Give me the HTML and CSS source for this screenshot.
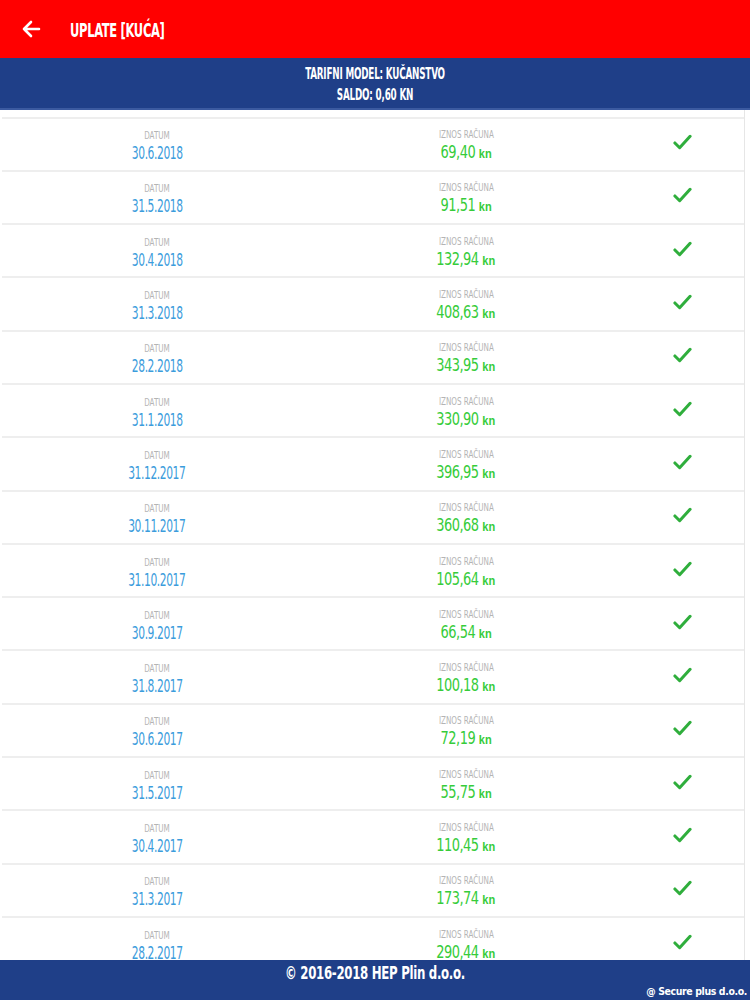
FILE: index.html
```html
<!DOCTYPE html>
<html lang="hr">
<head>
<meta charset="utf-8">
<title>Uplate</title>
<link rel="stylesheet" href="styles.css">
</head>
<body>
<div class="app">
  <header class="topbar">
    <svg class="back" viewBox="0 0 24 24" width="24" height="24"><path d="M20 12H5M12 5l-7 7 7 7" fill="none" stroke="#fff" stroke-width="2.6" stroke-linecap="round" stroke-linejoin="round"/></svg>
    <h1 class="title">UPLATE [KUĆA]</h1>
  </header>
  <div class="info">
    <div>TARIFNI MODEL: KUČANSTVO</div>
    <div>SALDO: 0,60 KN</div>
  </div>
  <main class="list">
    <div class="row"><div class="col"><span class="lbl">DATUM</span><span class="date">30.6.2018</span></div><div class="col"><span class="lbl">IZNOS RAČUNA</span><span class="amt">69,40 <small>kn</small></span></div><div class="chk"><svg viewBox="0 0 20 16" width="19" height="16"><path d="M2 9l5 5L18 2" fill="none" stroke="#2fae3c" stroke-width="3.2" stroke-linecap="round" stroke-linejoin="round"/></svg></div></div>
    <div class="row"><div class="col"><span class="lbl">DATUM</span><span class="date">31.5.2018</span></div><div class="col"><span class="lbl">IZNOS RAČUNA</span><span class="amt">91,51 <small>kn</small></span></div><div class="chk"><svg viewBox="0 0 20 16" width="19" height="16"><path d="M2 9l5 5L18 2" fill="none" stroke="#2fae3c" stroke-width="3.2" stroke-linecap="round" stroke-linejoin="round"/></svg></div></div>
    <div class="row"><div class="col"><span class="lbl">DATUM</span><span class="date">30.4.2018</span></div><div class="col"><span class="lbl">IZNOS RAČUNA</span><span class="amt">132,94 <small>kn</small></span></div><div class="chk"><svg viewBox="0 0 20 16" width="19" height="16"><path d="M2 9l5 5L18 2" fill="none" stroke="#2fae3c" stroke-width="3.2" stroke-linecap="round" stroke-linejoin="round"/></svg></div></div>
    <div class="row"><div class="col"><span class="lbl">DATUM</span><span class="date">31.3.2018</span></div><div class="col"><span class="lbl">IZNOS RAČUNA</span><span class="amt">408,63 <small>kn</small></span></div><div class="chk"><svg viewBox="0 0 20 16" width="19" height="16"><path d="M2 9l5 5L18 2" fill="none" stroke="#2fae3c" stroke-width="3.2" stroke-linecap="round" stroke-linejoin="round"/></svg></div></div>
    <div class="row"><div class="col"><span class="lbl">DATUM</span><span class="date">28.2.2018</span></div><div class="col"><span class="lbl">IZNOS RAČUNA</span><span class="amt">343,95 <small>kn</small></span></div><div class="chk"><svg viewBox="0 0 20 16" width="19" height="16"><path d="M2 9l5 5L18 2" fill="none" stroke="#2fae3c" stroke-width="3.2" stroke-linecap="round" stroke-linejoin="round"/></svg></div></div>
    <div class="row"><div class="col"><span class="lbl">DATUM</span><span class="date">31.1.2018</span></div><div class="col"><span class="lbl">IZNOS RAČUNA</span><span class="amt">330,90 <small>kn</small></span></div><div class="chk"><svg viewBox="0 0 20 16" width="19" height="16"><path d="M2 9l5 5L18 2" fill="none" stroke="#2fae3c" stroke-width="3.2" stroke-linecap="round" stroke-linejoin="round"/></svg></div></div>
    <div class="row"><div class="col"><span class="lbl">DATUM</span><span class="date">31.12.2017</span></div><div class="col"><span class="lbl">IZNOS RAČUNA</span><span class="amt">396,95 <small>kn</small></span></div><div class="chk"><svg viewBox="0 0 20 16" width="19" height="16"><path d="M2 9l5 5L18 2" fill="none" stroke="#2fae3c" stroke-width="3.2" stroke-linecap="round" stroke-linejoin="round"/></svg></div></div>
    <div class="row"><div class="col"><span class="lbl">DATUM</span><span class="date">30.11.2017</span></div><div class="col"><span class="lbl">IZNOS RAČUNA</span><span class="amt">360,68 <small>kn</small></span></div><div class="chk"><svg viewBox="0 0 20 16" width="19" height="16"><path d="M2 9l5 5L18 2" fill="none" stroke="#2fae3c" stroke-width="3.2" stroke-linecap="round" stroke-linejoin="round"/></svg></div></div>
    <div class="row"><div class="col"><span class="lbl">DATUM</span><span class="date">31.10.2017</span></div><div class="col"><span class="lbl">IZNOS RAČUNA</span><span class="amt">105,64 <small>kn</small></span></div><div class="chk"><svg viewBox="0 0 20 16" width="19" height="16"><path d="M2 9l5 5L18 2" fill="none" stroke="#2fae3c" stroke-width="3.2" stroke-linecap="round" stroke-linejoin="round"/></svg></div></div>
    <div class="row"><div class="col"><span class="lbl">DATUM</span><span class="date">30.9.2017</span></div><div class="col"><span class="lbl">IZNOS RAČUNA</span><span class="amt">66,54 <small>kn</small></span></div><div class="chk"><svg viewBox="0 0 20 16" width="19" height="16"><path d="M2 9l5 5L18 2" fill="none" stroke="#2fae3c" stroke-width="3.2" stroke-linecap="round" stroke-linejoin="round"/></svg></div></div>
    <div class="row"><div class="col"><span class="lbl">DATUM</span><span class="date">31.8.2017</span></div><div class="col"><span class="lbl">IZNOS RAČUNA</span><span class="amt">100,18 <small>kn</small></span></div><div class="chk"><svg viewBox="0 0 20 16" width="19" height="16"><path d="M2 9l5 5L18 2" fill="none" stroke="#2fae3c" stroke-width="3.2" stroke-linecap="round" stroke-linejoin="round"/></svg></div></div>
    <div class="row"><div class="col"><span class="lbl">DATUM</span><span class="date">30.6.2017</span></div><div class="col"><span class="lbl">IZNOS RAČUNA</span><span class="amt">72,19 <small>kn</small></span></div><div class="chk"><svg viewBox="0 0 20 16" width="19" height="16"><path d="M2 9l5 5L18 2" fill="none" stroke="#2fae3c" stroke-width="3.2" stroke-linecap="round" stroke-linejoin="round"/></svg></div></div>
    <div class="row"><div class="col"><span class="lbl">DATUM</span><span class="date">31.5.2017</span></div><div class="col"><span class="lbl">IZNOS RAČUNA</span><span class="amt">55,75 <small>kn</small></span></div><div class="chk"><svg viewBox="0 0 20 16" width="19" height="16"><path d="M2 9l5 5L18 2" fill="none" stroke="#2fae3c" stroke-width="3.2" stroke-linecap="round" stroke-linejoin="round"/></svg></div></div>
    <div class="row"><div class="col"><span class="lbl">DATUM</span><span class="date">30.4.2017</span></div><div class="col"><span class="lbl">IZNOS RAČUNA</span><span class="amt">110,45 <small>kn</small></span></div><div class="chk"><svg viewBox="0 0 20 16" width="19" height="16"><path d="M2 9l5 5L18 2" fill="none" stroke="#2fae3c" stroke-width="3.2" stroke-linecap="round" stroke-linejoin="round"/></svg></div></div>
    <div class="row"><div class="col"><span class="lbl">DATUM</span><span class="date">31.3.2017</span></div><div class="col"><span class="lbl">IZNOS RAČUNA</span><span class="amt">173,74 <small>kn</small></span></div><div class="chk"><svg viewBox="0 0 20 16" width="19" height="16"><path d="M2 9l5 5L18 2" fill="none" stroke="#2fae3c" stroke-width="3.2" stroke-linecap="round" stroke-linejoin="round"/></svg></div></div>
    <div class="row"><div class="col"><span class="lbl">DATUM</span><span class="date">28.2.2017</span></div><div class="col"><span class="lbl">IZNOS RAČUNA</span><span class="amt">290,44 <small>kn</small></span></div><div class="chk"><svg viewBox="0 0 20 16" width="19" height="16"><path d="M2 9l5 5L18 2" fill="none" stroke="#2fae3c" stroke-width="3.2" stroke-linecap="round" stroke-linejoin="round"/></svg></div></div>
  </main>
  <footer class="footer">
    <div class="copy">© 2016-2018 HEP Plin d.o.o.</div>
    <div class="secure">@ Secure plus d.o.o.</div>
  </footer>
</div>
</body>
</html>
```
FILE: styles.css
```css
* { box-sizing: border-box; }
html, body { margin: 0; padding: 0; }
body {
  width: 750px;
  height: 1000px;
  overflow: hidden;
  background: #fff;
  font-family: "Liberation Sans Narrow", "DejaVu Sans Condensed", "Liberation Sans", sans-serif;
}
.app {
  height: 1000px;
  display: flex;
  flex-direction: column;
}
.topbar {
  height: 58px;
  flex: none;
  background: #ff0000;
  display: flex;
  align-items: center;
  padding-left: 19px;
}
.back { display: block; }
.title {
  margin: 1px 0 0 27px;
  color: #fff;
  font-size: 20px;
  font-weight: bold;
  letter-spacing: -0.5px;
  transform: scaleX(0.64);
  transform-origin: left center;
  white-space: nowrap;
}
.info {
  height: 52px;
  flex: none;
  background: #1f3f88;
  border-bottom: 2px solid #3b5aa0;
  color: #fff;
  font-weight: bold;
  font-size: 16px;
  line-height: 21px;
  text-align: center;
  display: flex;
  flex-direction: column;
  justify-content: center;
  letter-spacing: -0.3px;
  padding-top: 2px;
}
.info div { transform: scaleX(0.61); }
.list {
  flex: 1;
  overflow: hidden;
  padding: 6.5px 6px 0 2px;
  position: relative;
}
.list::after {
  content: "";
  position: absolute;
  top: 0;
  bottom: 0;
  right: 5px;
  width: 1px;
  background: #e6e6e6;
}
.row {
  height: 53.3px;
  border-top: 2px solid #eeeeee;
  display: grid;
  grid-template-columns: 310px 308px 1fr;
  align-items: center;
}
.col {
  display: flex;
  flex-direction: column;
  align-items: center;
  padding-top: 5px;
}
.lbl {
  font-size: 10px;
  color: #b4b4b4;
  line-height: 13px;
  transform: scaleX(0.8);
}
.date {
  font-size: 17px;
  color: #3b9cdc;
  line-height: 22px;
  letter-spacing: -0.6px;
  transform: scaleX(0.7);
}
.amt {
  font-size: 17px;
  color: #36cc3a;
  line-height: 22px;
  letter-spacing: -0.6px;
  transform: scaleX(0.85);
}
.amt small {
  font-size: 13px;
  font-weight: bold;
  font-family: "Liberation Sans", sans-serif;
  letter-spacing: 0;
}
.chk {
  display: flex;
  justify-content: center;
  padding-left: 0;
  padding-bottom: 4px;
}
.chk svg { display: block; }
.footer {
  height: 40px;
  flex: none;
  background: #1f3f88;
  color: #fff;
  display: flex;
  flex-direction: column;
  position: relative;
}
.copy {
  text-align: center;
  font-weight: bold;
  font-size: 17px;
  line-height: 27px;
  letter-spacing: -0.4px;
  transform: scaleX(0.77);
}
.secure {
  position: absolute;
  right: 3px;
  bottom: 2px;
  font-size: 11px;
  font-weight: bold;
  letter-spacing: -0.4px;
  transform: scaleX(0.95);
  transform-origin: right center;
}
```
